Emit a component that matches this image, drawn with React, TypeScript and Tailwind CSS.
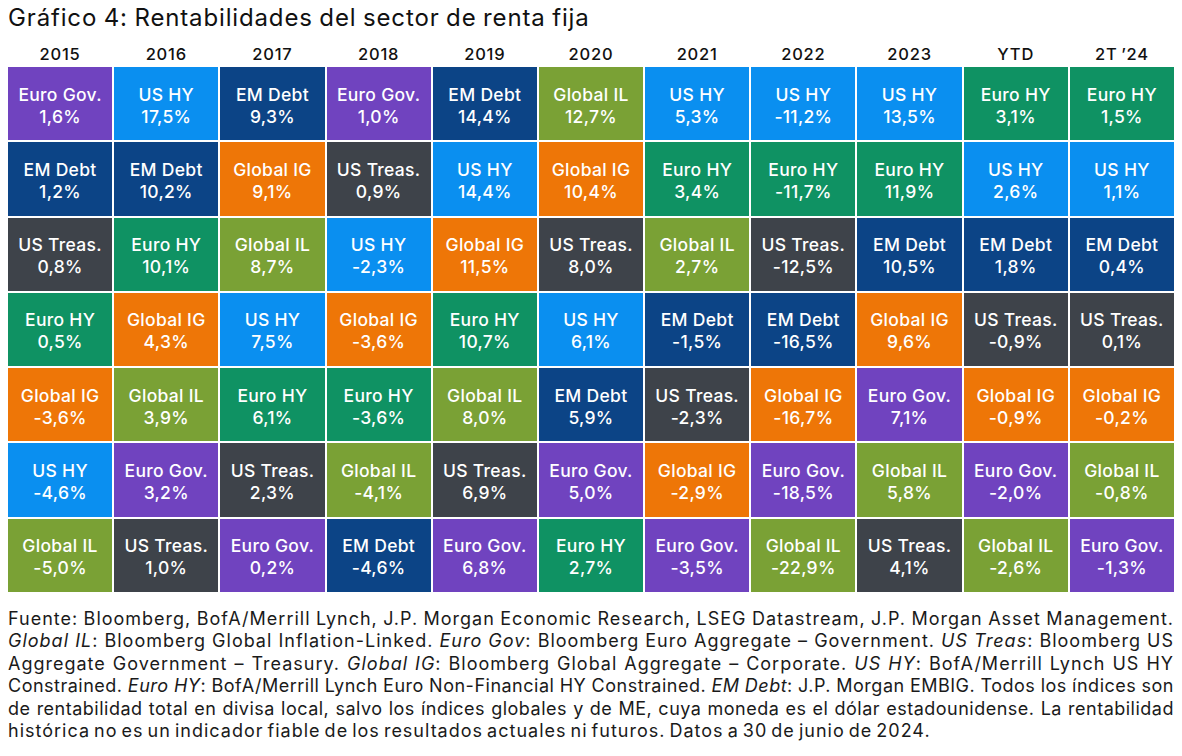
type Sector =
  | "Euro Gov."
  | "US HY"
  | "EM Debt"
  | "Global IG"
  | "US Treas."
  | "Euro HY"
  | "Global IL";

const SECTOR_BG: Record<Sector, string> = {
  "Euro Gov.": "bg-[#7043bf]",
  "US HY": "bg-[#0a8ff0]",
  "EM Debt": "bg-[#0c4486]",
  "Global IG": "bg-[#ee7607]",
  "US Treas.": "bg-[#3e434a]",
  "Euro HY": "bg-[#0f9263]",
  "Global IL": "bg-[#7aa135]",
};

type Column = { year: string; cells: [Sector, string][] };

const COLUMNS: Column[] = [
  {
    year: "2015",
    cells: [
      ["Euro Gov.", "1,6%"],
      ["EM Debt", "1,2%"],
      ["US Treas.", "0,8%"],
      ["Euro HY", "0,5%"],
      ["Global IG", "-3,6%"],
      ["US HY", "-4,6%"],
      ["Global IL", "-5,0%"],
    ],
  },
  {
    year: "2016",
    cells: [
      ["US HY", "17,5%"],
      ["EM Debt", "10,2%"],
      ["Euro HY", "10,1%"],
      ["Global IG", "4,3%"],
      ["Global IL", "3,9%"],
      ["Euro Gov.", "3,2%"],
      ["US Treas.", "1,0%"],
    ],
  },
  {
    year: "2017",
    cells: [
      ["EM Debt", "9,3%"],
      ["Global IG", "9,1%"],
      ["Global IL", "8,7%"],
      ["US HY", "7,5%"],
      ["Euro HY", "6,1%"],
      ["US Treas.", "2,3%"],
      ["Euro Gov.", "0,2%"],
    ],
  },
  {
    year: "2018",
    cells: [
      ["Euro Gov.", "1,0%"],
      ["US Treas.", "0,9%"],
      ["US HY", "-2,3%"],
      ["Global IG", "-3,6%"],
      ["Euro HY", "-3,6%"],
      ["Global IL", "-4,1%"],
      ["EM Debt", "-4,6%"],
    ],
  },
  {
    year: "2019",
    cells: [
      ["EM Debt", "14,4%"],
      ["US HY", "14,4%"],
      ["Global IG", "11,5%"],
      ["Euro HY", "10,7%"],
      ["Global IL", "8,0%"],
      ["US Treas.", "6,9%"],
      ["Euro Gov.", "6,8%"],
    ],
  },
  {
    year: "2020",
    cells: [
      ["Global IL", "12,7%"],
      ["Global IG", "10,4%"],
      ["US Treas.", "8,0%"],
      ["US HY", "6,1%"],
      ["EM Debt", "5,9%"],
      ["Euro Gov.", "5,0%"],
      ["Euro HY", "2,7%"],
    ],
  },
  {
    year: "2021",
    cells: [
      ["US HY", "5,3%"],
      ["Euro HY", "3,4%"],
      ["Global IL", "2,7%"],
      ["EM Debt", "-1,5%"],
      ["US Treas.", "-2,3%"],
      ["Global IG", "-2,9%"],
      ["Euro Gov.", "-3,5%"],
    ],
  },
  {
    year: "2022",
    cells: [
      ["US HY", "-11,2%"],
      ["Euro HY", "-11,7%"],
      ["US Treas.", "-12,5%"],
      ["EM Debt", "-16,5%"],
      ["Global IG", "-16,7%"],
      ["Euro Gov.", "-18,5%"],
      ["Global IL", "-22,9%"],
    ],
  },
  {
    year: "2023",
    cells: [
      ["US HY", "13,5%"],
      ["Euro HY", "11,9%"],
      ["EM Debt", "10,5%"],
      ["Global IG", "9,6%"],
      ["Euro Gov.", "7,1%"],
      ["Global IL", "5,8%"],
      ["US Treas.", "4,1%"],
    ],
  },
  {
    year: "YTD",
    cells: [
      ["Euro HY", "3,1%"],
      ["US HY", "2,6%"],
      ["EM Debt", "1,8%"],
      ["US Treas.", "-0,9%"],
      ["Global IG", "-0,9%"],
      ["Euro Gov.", "-2,0%"],
      ["Global IL", "-2,6%"],
    ],
  },
  {
    year: "2T\u2009\u201924",
    cells: [
      ["Euro HY", "1,5%"],
      ["US HY", "1,1%"],
      ["EM Debt", "0,4%"],
      ["US Treas.", "0,1%"],
      ["Global IG", "-0,2%"],
      ["Global IL", "-0,8%"],
      ["Euro Gov.", "-1,3%"],
    ],
  },
];

const justifyLine = "text-justify [text-align-last:justify]";

const I = ({ children }: { children: string }) => <em className="italic">{children}</em>;

export default function App() {
  return (
    <div className="h-[756px] w-[1182px] overflow-hidden bg-white px-2 font-['Inter',sans-serif] text-[#111]">
      {/* Title */}
      <h1 className="pt-[4px] text-[24px] leading-[28px] font-normal tracking-[0.85px] [word-spacing:-1px]">
        Gráfico 4: Rentabilidades del sector de renta fija
      </h1>

      {/* Year header */}
      <div className="grid h-[35px] grid-cols-11 gap-x-[2px]">
        {COLUMNS.map((col) => (
          <div
            key={col.year}
            className="flex items-end justify-center pb-[3px] text-[16.5px] leading-[20px] font-medium tracking-[0.8px]"
          >
            {col.year}
          </div>
        ))}
      </div>

      {/* Ranking grid */}
      <div className="grid h-[525px] grid-flow-col grid-cols-11 grid-rows-7 gap-[2px]">
        {COLUMNS.map((col) =>
          col.cells.map(([sector, value], i) => (
            <div
              key={`${col.year}-${i}`}
              className={`${SECTOR_BG[sector]} flex flex-col items-center justify-center pt-[4px] text-[17.5px] leading-[22px] font-medium tracking-[0.3px] text-white`}
            >
              <span>{sector}</span>
              <span>{value}</span>
            </div>
          )),
        )}
      </div>

      {/* Footnote */}
      <div className="mt-[16px] text-[18px] leading-[22.4px] tracking-[1px] text-[#1a1a1a] [word-spacing:-2px]">
        <div className={justifyLine}>
          Fuente: Bloomberg, BofA/Merrill Lynch, J.P. Morgan Economic Research, LSEG Datastream, J.P. Morgan Asset Management.
        </div>
        <div className={justifyLine}>
          <I>Global IL</I>: Bloomberg Global Inflation-Linked. <I>Euro Gov</I>: Bloomberg Euro Aggregate – Government.{" "}
          <I>US Treas</I>: Bloomberg US
        </div>
        <div className={justifyLine}>
          Aggregate Government – Treasury. <I>Global IG</I>: Bloomberg Global Aggregate – Corporate. <I>US HY</I>:
          BofA/Merrill Lynch US HY
        </div>
        <div className={`${justifyLine} tracking-[0.5px] [word-spacing:-3px]`}>
          Constrained. <I>Euro HY</I>: BofA/Merrill Lynch Euro Non-Financial HY Constrained. <I>EM Debt</I>: J.P.
          Morgan EMBIG. Todos los índices son
        </div>
        <div className={`${justifyLine} tracking-[0.5px] [word-spacing:-3px]`}>
          de rentabilidad total en divisa local, salvo los índices globales y de ME, cuya moneda es el dólar
          estadounidense. La rentabilidad
        </div>
        <div>
          histórica no es un indicador fiable de los resultados actuales ni futuros. Datos a 30 de junio de 2024.
        </div>
      </div>
    </div>
  );
}
